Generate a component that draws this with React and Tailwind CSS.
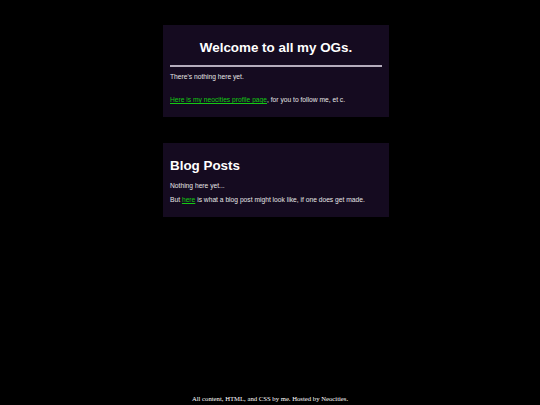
export default function App() {
  return (
    <div className="h-[405px] w-[540px] bg-black flex flex-col overflow-hidden" style={{ fontFamily: '"Liberation Sans", Arial, sans-serif' }}>
      <div className="ml-[163px] w-[226px] mt-[25px] bg-[#150b20] px-[7px] pt-[15px] pb-[13px] text-[6.7px] leading-[8px] text-[#e6e6e6]">
        <h1 className="text-center text-[13.4px] leading-[16px] font-bold text-white">Welcome to all my OGs.</h1>
        <div className="mt-[9px] h-[2px] bg-[#b5adbd]"></div>
        <p className="mt-[6px]">There's nothing here yet.</p>
        <p className="mt-[15px]"><a className="text-[#14c814] underline" href="#">Here is my neocities profile page</a>, for you to follow me, et c.</p>
      </div>
      <div className="ml-[163px] w-[226px] mt-[26px] bg-[#150b20] px-[7px] pt-[15px] pb-[13px] text-[6.7px] leading-[8px] text-[#e6e6e6]">
        <h2 className="text-[13.4px] leading-[16px] font-bold text-white">Blog Posts</h2>
        <p className="mt-[8px]">Nothing here yet...</p>
        <p className="mt-[6px]">But <a className="text-[#14c814] underline" href="#">here</a> is what a blog post might look like, if one does get made.</p>
      </div>
      <div className="mt-auto mb-[2px] text-center text-[6.7px] leading-[8px] text-white" style={{ fontFamily: '"Liberation Serif", "Times New Roman", serif' }}>
        All content, HTML, and CSS by me. Hosted by Neocities.
      </div>
    </div>
  );
}
